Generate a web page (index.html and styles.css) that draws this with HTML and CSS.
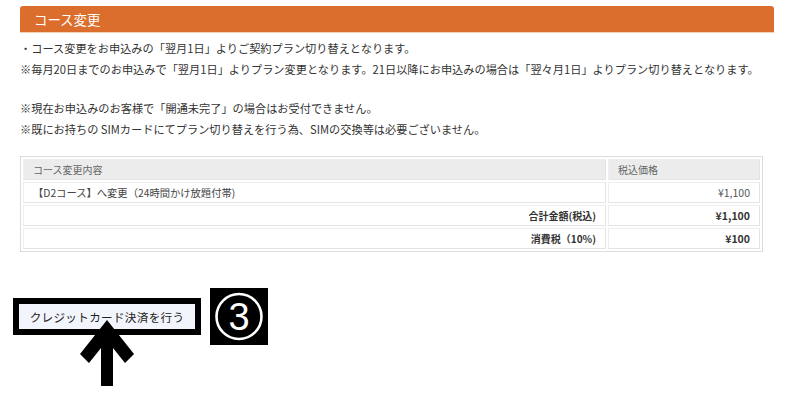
FILE: index.html
```html
<!DOCTYPE html>
<html lang="ja">
<head>
<meta charset="utf-8">
<link rel="stylesheet" href="styles.css">
</head>
<body>
<div class="page">
  <h2 class="section-title">コース変更</h2>
  <div class="notes">
    <p>・コース変更をお申込みの「翌月1日」よりご契約プラン切り替えとなります。<br>※毎月20日までのお申込みで「翌月1日」よりプラン変更となります。21日以降にお申込みの場合は「翌々月1日」よりプラン切り替えとなります。</p>
    <p>※現在お申込みのお客様で「開通未完了」の場合はお受付できません。<br>※既にお持ちの SIMカードにてプラン切り替えを行う為、SIMの交換等は必要ございません。</p>
  </div>
  <table class="course-table">
    <tr>
      <th class="col-name">コース変更内容</th>
      <th class="col-price">税込価格</th>
    </tr>
    <tr>
      <td class="item">【D2コース】へ変更（24時間かけ放題付帯)</td>
      <td class="price">¥1,100</td>
    </tr>
    <tr>
      <td class="label">合計金額(税込)</td>
      <td class="price strong">¥1,100</td>
    </tr>
    <tr>
      <td class="label">消費税（10%)</td>
      <td class="price strong">¥100</td>
    </tr>
  </table>
  <div class="action">
    <div class="btn-frame"><button class="pay-btn">クレジットカード決済を行う</button></div>
    <div class="step-badge">
      <svg width="58" height="57" viewBox="0 0 58 57">
        <circle cx="29" cy="28.5" r="22.5" fill="none" stroke="#fff" stroke-width="2.6"/>
        <text x="29" y="42" text-anchor="middle" fill="#fff" font-family="Liberation Sans, Arial, sans-serif" font-size="38">3</text>
      </svg>
    </div>
    <svg class="arrow" width="60" height="70" viewBox="75 320 60 70">
      <polygon points="107,322 80,356 89,365 101,350 101,388 113,388 113,350 125,365 134,356" fill="#000"/>
    </svg>
  </div>
</div>
</body>
</html>
```

FILE: styles.css
```css
* { box-sizing: border-box; }
html, body { margin: 0; padding: 0; background: #fff; }
body {
  font-family: "Noto Sans CJK JP", "Noto Sans", sans-serif;
  color: #333;
  width: 792px;
  height: 404px;
  overflow: hidden;
}
.page {
  padding: 6px 18px 0 20px;
  position: relative;
}
.section-title {
  margin: 0;
  height: 27px;
  background: #dc6e2d;
  border-bottom: 1px solid #f7cfb2;
  border-radius: 3px 3px 0 0;
  color: #fff;
  font-size: 13.4px;
  font-weight: normal;
  line-height: 26px;
  padding-left: 14px;
}
.notes { margin-top: 5px; }
.notes p {
  margin: 0 0 18px 0;
  font-size: 11.2px;
  line-height: 21px;
  white-space: nowrap;
}
.notes p:last-child { margin-bottom: 0; }
.course-table {
  margin-top: 16px;
  width: 743px;
  border: 1px solid #dcdcdc;
  border-collapse: separate;
  border-spacing: 2px;
  font-size: 10px;
}
.course-table th, .course-table td {
  height: 21px;
  padding: 0 9px;
  border: 1px solid #e4e4e4;
  border-top-color: #efefef;
  border-left-color: #efefef;
  font-weight: normal;
  text-align: left;
}
.course-table th {
  background: #ececec;
  color: #666;
}
.col-price { width: 152px; }
.item { color: #444; font-size: 10.3px; }
.label { text-align: right !important; font-weight: bold !important; color: #333; }
.price { text-align: right !important; color: #555; font-size: 10.5px; }
.price.strong { font-weight: bold; color: #333; }
.action {
  margin-top: 36px;
  display: flex;
  align-items: center;
  gap: 9px;
  position: relative;
  margin-left: -7px;
}
.btn-frame {
  border: 6px solid #000;
  background: #000;
}
.pay-btn {
  display: block;
  width: 176px;
  height: 25px;
  margin: 0;
  padding: 0;
  border: none;
  background: #f2f5fb;
  color: #222;
  font-family: "Noto Sans CJK JP", sans-serif;
  font-size: 11.6px;
  letter-spacing: 0.3px;
}
.step-badge {
  width: 58px;
  height: 57px;
  background: #000;
}
.step-badge svg { display: block; }
.arrow {
  position: absolute;
  left: 62px;
  top: 30px;
}
```
